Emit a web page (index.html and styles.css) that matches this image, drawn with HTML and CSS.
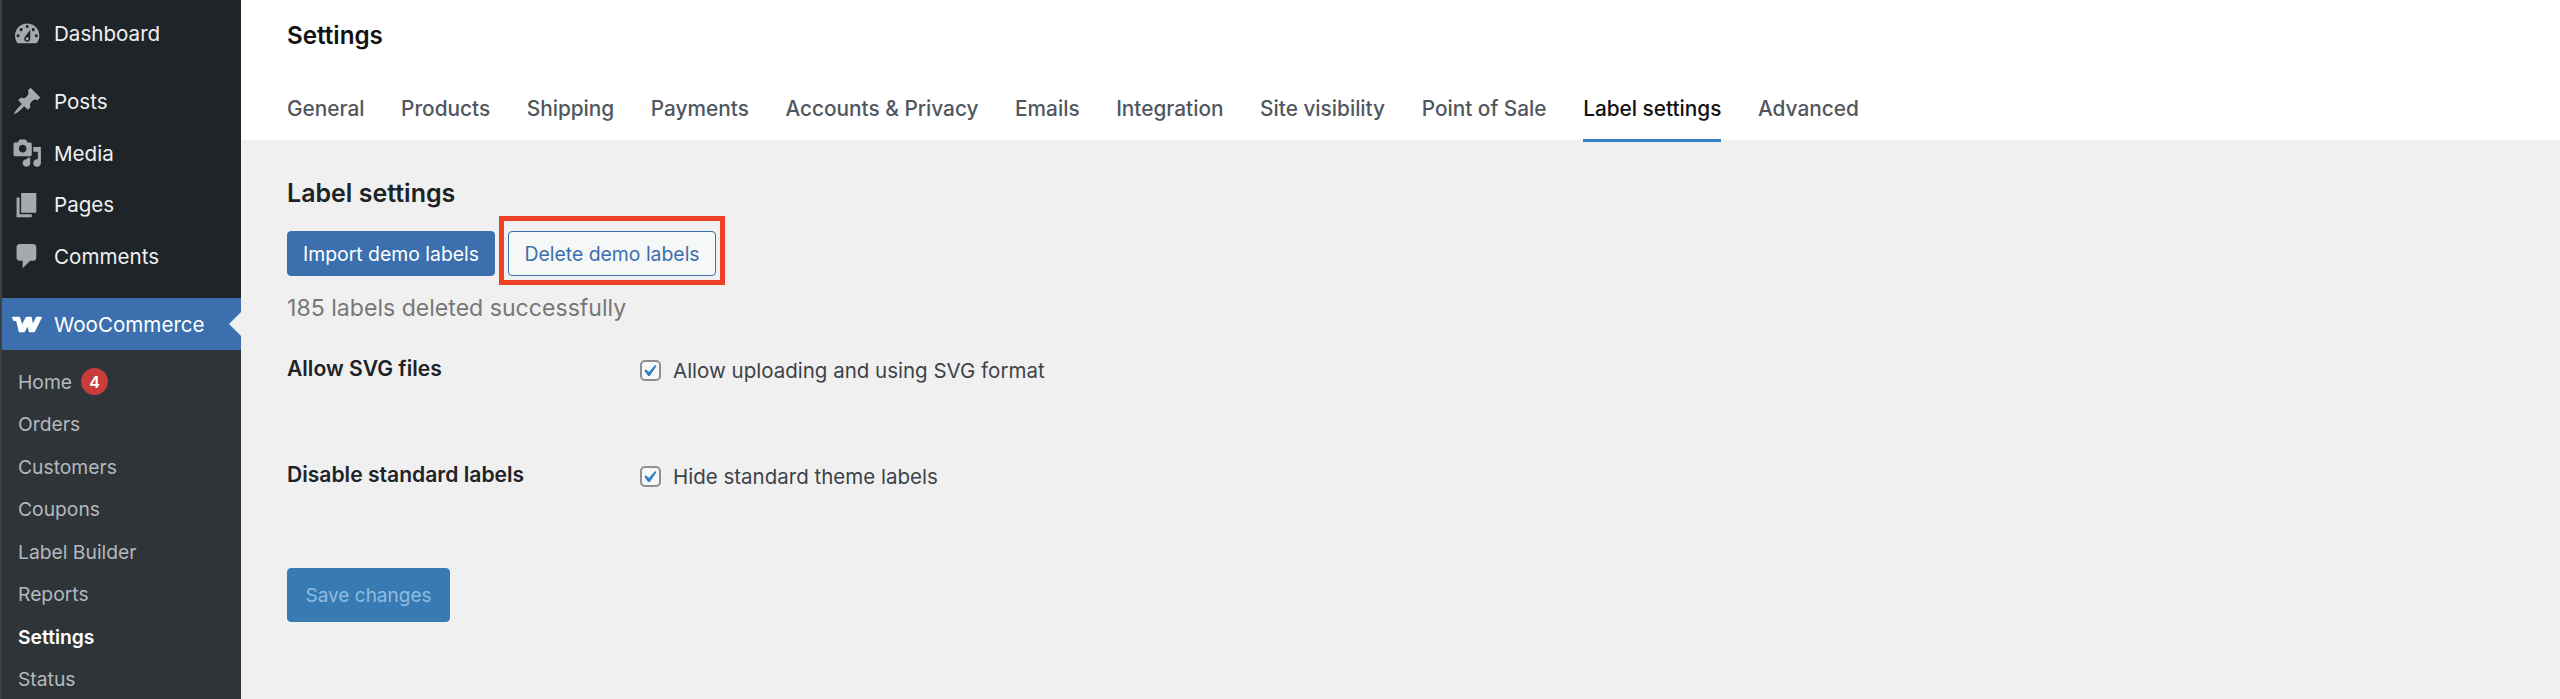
FILE: index.html
```html
<!DOCTYPE html>
<html lang="en">
<head>
<meta charset="utf-8">
<title>Label settings</title>
<link rel="stylesheet" href="styles.css">
</head>
<body>
<div class="app">
  <nav class="sidebar">
    <ul class="menu menu-top">
      <li class="item"><svg class="icon" viewBox="0 0 20 20"><path d="M3.76 16h12.48c1.1-1.37 1.76-3.11 1.76-5 0-4.42-3.58-8-8-8s-8 3.58-8 8c0 1.89.66 3.63 1.76 5zM10 4c.55 0 1 .45 1 1s-.45 1-1 1-1-.45-1-1 .45-1 1-1zM6 6c.55 0 1 .45 1 1s-.45 1-1 1-1-.45-1-1 .45-1 1-1zm8 0c.55 0 1 .45 1 1s-.45 1-1 1-1-.45-1-1 .45-1 1-1zm-5.37 5.55L12 7v6c0 1.1-.9 2-2 2s-2-.9-2-2c0-.57.24-1.08.63-1.45zM4 10c.55 0 1 .45 1 1s-.45 1-1 1-1-.45-1-1 .45-1 1-1zm12 0c.55 0 1 .45 1 1s-.45 1-1 1-1-.45-1-1 .45-1 1-1zm-5 3c0-.55-.45-1-1-1s-1 .45-1 1 .45 1 1 1 1-.45 1-1z"/></svg><span>Dashboard</span></li>
    </ul>
    <ul class="menu menu-content">
      <li class="item"><svg class="icon" viewBox="0 0 20 20"><path d="M10.44 3.02l1.82-1.82 6.36 6.35-1.83 1.82c-1.05-.68-2.48-.57-3.41.36l-.75.75c-.92.93-1.04 2.35-.35 3.41l-1.83 1.82-2.41-2.41-2.8 2.79c-.42.42-3.38 2.71-3.8 2.29s1.86-3.39 2.28-3.81l2.79-2.79L4.1 9.36l1.83-1.82c1.05.69 2.48.57 3.4-.36l.75-.75c.93-.92 1.05-2.35.36-3.41z"/></svg><span>Posts</span></li>
      <li class="item"><svg class="icon" viewBox="0 0 20 20"><path d="M13 11V4c0-.55-.45-1-1-1h-1.67L9 1H5L3.67 3H2c-.55 0-1 .45-1 1v7c0 .55.45 1 1 1h10c.55 0 1-.45 1-1zM7 4.5c1.38 0 2.5 1.12 2.5 2.5S8.38 9.5 7 9.5 4.5 8.38 4.5 7 5.62 4.5 7 4.5zM14 6h5v10.5c0 1.38-1.12 2.5-2.5 2.5S14 17.88 14 16.5s1.12-2.5 2.5-2.5c.17 0 .34.02.5.05V9h-3V6zm-4 8.05V13h2v3.5c0 1.38-1.12 2.5-2.5 2.5S7 17.88 7 16.5 8.12 14 9.5 14c.17 0 .34.02.5.05z"/></svg><span>Media</span></li>
      <li class="item"><svg class="icon" viewBox="0 0 20 20"><path d="M6 15V2h10v13H6zm-1 1h8v2H3V5h2v11z"/></svg><span>Pages</span></li>
      <li class="item"><svg class="icon" viewBox="0 0 20 20"><path d="M5 2h9c1.1 0 2 .9 2 2v7c0 1.1-.9 2-2 2h-2l-5 5v-5H5c-1.1 0-2-.9-2-2V4c0-1.1.9-2 2-2z"/></svg><span>Comments</span></li>
    </ul>
    <div class="item item-active">
      <svg class="logo" viewBox="0 0 30 17"><path d="M.8 1.500h6.500l2.600 8.700 4.700-8.700h4.300l1.700 8.700 4-8.700h4.500l-6.900 14h-4.600l-1.700-7-3.900 7H7.600L4.800 4.200H2z"/></svg>
      <span>WooCommerce</span>
    </div>
    <ul class="submenu">
      <li class="sub">Home<span class="badge">4</span></li>
      <li class="sub">Orders</li>
      <li class="sub">Customers</li>
      <li class="sub">Coupons</li>
      <li class="sub">Label Builder</li>
      <li class="sub">Reports</li>
      <li class="sub sub-current">Settings</li>
      <li class="sub">Status</li>
    </ul>
  </nav>
  <main class="main">
    <header class="topbar">
      <h1 class="page-title">Settings</h1>
      <div class="tabs">
        <a class="tab">General</a>
        <a class="tab">Products</a>
        <a class="tab">Shipping</a>
        <a class="tab">Payments</a>
        <a class="tab">Accounts &amp; Privacy</a>
        <a class="tab">Emails</a>
        <a class="tab">Integration</a>
        <a class="tab">Site visibility</a>
        <a class="tab">Point of Sale</a>
        <a class="tab tab-active">Label settings</a>
        <a class="tab">Advanced</a>
      </div>
    </header>
    <section class="content">
      <h2 class="section-title">Label settings</h2>
      <div class="actions">
        <button class="btn btn-primary">Import demo labels</button>
        <div class="highlighted">
          <button class="btn btn-secondary">Delete demo labels</button>
          <span class="highlight-box"></span>
        </div>
      </div>
      <p class="message">185 labels deleted successfully</p>
      <div class="row row-first">
        <div class="row-label">Allow SVG files</div>
        <label class="check"><span class="checkbox"><svg viewBox="3.8 2.35 14.4 14.4"><path d="M14.83 4.89l1.34.94-5.81 8.38H9.02L5.78 9.67l1.34-1.25 2.57 2.4z"/></svg></span>Allow uploading and using SVG format</label>
      </div>
      <div class="row row-second">
        <div class="row-label">Disable standard labels</div>
        <label class="check"><span class="checkbox"><svg viewBox="3.8 2.35 14.4 14.4"><path d="M14.83 4.89l1.34.94-5.81 8.38H9.02L5.78 9.67l1.34-1.25 2.57 2.4z"/></svg></span>Hide standard theme labels</label>
      </div>
      <button class="btn btn-save">Save changes</button>
    </section>
  </main>
</div>
</body>
</html>
```
FILE: styles.css
```css
* { box-sizing: border-box; }
html, body { margin: 0; padding: 0; height: 100%; overflow: hidden; }
body { font-family: Inter, "Noto Sans", sans-serif; background: #f0f0f0; color: #3c434a; }
ul { list-style: none; margin: 0; padding: 0; }

.app { display: flex; height: 699px; }

.sidebar { width: 241px; flex: none; height: 699px; overflow: hidden; background: #1f2428; border-left: 2px solid #3a4045; }
.menu-top { padding-top: 8px; }
.menu-content { padding-top: 16px; padding-bottom: 16px; }
.item { display: flex; align-items: center; height: 51.7px; font-size: 20.6px; color: #f0f0f1; position: relative; }
.icon { width: 30.4px; height: 30.4px; margin-left: 10px; margin-right: 11.6px; fill: #a7aaad; flex: none; }
.item-active { background: #3b6fad; color: #fff; margin-left: -2px; }
.item-active::after { content: ""; position: absolute; right: 0; top: 50%; margin-top: -12px; border: 12px solid transparent; border-right-color: #f0f0f0; border-left-width: 0; }
.logo { width: 30px; height: 17px; margin-left: 12px; margin-right: 12px; fill: #fff; stroke: #fff; stroke-width: 1.6; stroke-linejoin: round; flex: none; overflow: visible; }
.submenu { background: #2f3438; padding-top: 10.5px; height: 400px; margin-left: -2px; border-left: 2px solid #4a5258; }
.sub { display: flex; align-items: center; height: 42.5px; padding-left: 16px; font-size: 19.3px; color: #b4b9be; }
.sub-current { color: #fff; font-weight: 600; }
.badge { display: flex; align-items: center; justify-content: center; width: 27px; height: 27px; margin-left: 9px; border-radius: 50%; background: #c93c3c; color: #fff; font-size: 16px; font-weight: 600; }

.main { flex: 1; min-width: 0; }
.topbar { background: #fff; height: 140px; padding: 0 0 0 46px; position: relative; }
.page-title { margin: 0; padding-top: 22px; height: 84px; font-size: 24.2px; line-height: 28px; font-weight: 600; color: #111; }
.tabs { display: flex; gap: 36.6px; }
.tab { display: block; height: 58px; padding-top: 12px; font-size: 20.8px; line-height: 26px; font-weight: 500; color: #50575e; border-bottom: 3px solid transparent; }
.tab-active { color: #111; border-bottom-color: #3582c4; }

.content { padding: 0 0 0 46px; }
.section-title { margin: 0; padding-top: 37px; height: 91px; font-size: 25px; line-height: 32px; font-weight: 600; color: #1d2327; }
.actions { display: flex; gap: 13px; }
.highlighted { position: relative; display: flex; }
.btn { font-family: inherit; border-radius: 4px; height: 45px; font-size: 19.4px; cursor: pointer; }
.btn-primary { width: 208px; background: #3b6fad; border: 1px solid #3b6fad; color: #fff; }
.btn-secondary { width: 208px; background: #f6f7f7; border: 1.5px solid #3b6fad; color: #3b6fad; }
.highlight-box { position: absolute; left: -9px; top: -15px; width: 226px; height: 69px; border: 5px solid #ee4123; }
.message { margin: 0; padding-top: 17px; height: 49px; font-size: 23.1px; line-height: 30px; color: #777; }
.row { display: flex; align-items: flex-start; }
.row-first { padding-top: 31px; height: 137px; }
.row-second { height: 106px; }
.row-label { width: 353px; flex: none; font-size: 21.1px; line-height: 28px; font-weight: 600; color: #1d2327; margin-top: -1px; }
.check { display: flex; align-items: center; height: 28px; font-size: 20.5px; color: #3c434a; }
.checkbox { width: 21px; height: 21px; margin-right: 12px; border: 2px solid #8c8f94; border-radius: 5px; background: #f6f7f7; display: block; }
.checkbox svg { display: block; width: 100%; height: 100%; fill: #3582c4; }
.btn-save { display: block; width: 163px; height: 54px; font-size: 19px; background: #377ab4; border: 1px solid #377ab4; color: #8fbce0; }
```
